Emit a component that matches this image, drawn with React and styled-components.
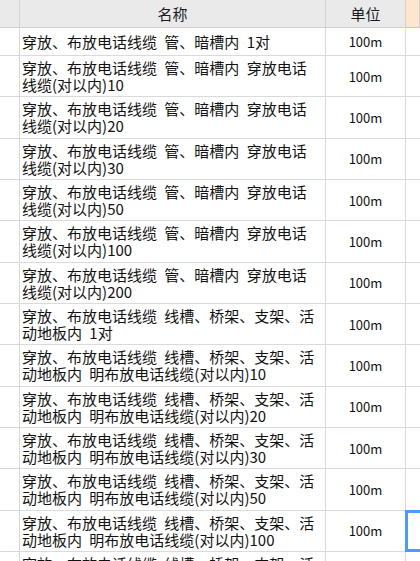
import React from 'react';
import styled, { createGlobalStyle } from 'styled-components';

const GlobalStyle = createGlobalStyle`
  html, body {
    margin: 0;
    padding: 0;
    background: #ffffff;
    overflow: hidden;
  }
  body {
    font-family: "Noto Sans CJK SC", "Noto Sans", sans-serif;
    color: #111;
  }
`;

const names = [
  '穿放、布放电话线缆 管、暗槽内 1对',
  '穿放、布放电话线缆 管、暗槽内 穿放电话线缆(对以内)10',
  '穿放、布放电话线缆 管、暗槽内 穿放电话线缆(对以内)20',
  '穿放、布放电话线缆 管、暗槽内 穿放电话线缆(对以内)30',
  '穿放、布放电话线缆 管、暗槽内 穿放电话线缆(对以内)50',
  '穿放、布放电话线缆 管、暗槽内 穿放电话线缆(对以内)100',
  '穿放、布放电话线缆 管、暗槽内 穿放电话线缆(对以内)200',
  '穿放、布放电话线缆 线槽、桥架、支架、活动地板内 1对',
  '穿放、布放电话线缆 线槽、桥架、支架、活动地板内 明布放电话线缆(对以内)10',
  '穿放、布放电话线缆 线槽、桥架、支架、活动地板内 明布放电话线缆(对以内)20',
  '穿放、布放电话线缆 线槽、桥架、支架、活动地板内 明布放电话线缆(对以内)30',
  '穿放、布放电话线缆 线槽、桥架、支架、活动地板内 明布放电话线缆(对以内)50',
  '穿放、布放电话线缆 线槽、桥架、支架、活动地板内 明布放电话线缆(对以内)100',
  '穿放、布放电话线缆 线槽、桥架、支架、活动地板内 明布放电话线缆(对以内)200',
];

const SELECTED_ROW = 12;

const Sheet = styled.div`
  width: 420px;
  height: 561px;
  overflow: hidden;
  display: flex;
  flex-direction: column;
`;

const Row = styled.div`
  display: grid;
  grid-template-columns: 20px 306px 80px 1fr;
  flex: 0 0 auto;
  height: ${(p) => p.$height}px;
`;

const HeadCell = styled.div`
  display: flex;
  align-items: center;
  justify-content: center;
  background: ${(p) => (p.$active ? '#fde6cc' : '#eaeaea')};
  border-right: 1px solid #d2d2d2;
  border-bottom: 1px solid ${(p) => (p.$active ? '#a9c8ef' : '#cfcfcf')};
  font-size: 15px;
  color: #1a1a1a;
`;

const GutterCell = styled.div`
  border-right: 1px solid #d8d8d8;
  border-bottom: 1px solid #d8d8d8;
`;

const NameCell = styled.div`
  display: flex;
  align-items: center;
  padding: 0 7px 0 2px;
  border-right: 1px solid #dadada;
  border-bottom: 1px solid #dadada;
  font-size: 15px;
  line-height: 17px;
  word-spacing: 4px;
  overflow: hidden;
`;

const UnitCell = styled.div`
  display: flex;
  align-items: center;
  justify-content: center;
  border-right: 1px solid #dadada;
  border-bottom: 1px solid #dadada;
  font-size: 13px;
  color: #111;
`;

const BlankCell = styled.div`
  position: relative;
  border-bottom: 1px solid #dadada;

  ${(p) =>
    p.$selected &&
    `
    &::after {
      content: '';
      position: absolute;
      left: -1px;
      top: -1px;
      right: -4px;
      bottom: -1px;
      border: 3px solid #4b9bff;
    }
  `}
`;

export default function App() {
  return (
    <Sheet>
      <GlobalStyle />
      <Row $height={28}>
        <HeadCell />
        <HeadCell>名称</HeadCell>
        <HeadCell>单位</HeadCell>
        <HeadCell $active />
      </Row>
      {names.map((name, i) => (
        <Row key={i} $height={i === 0 ? 28 : 41.33}>
          <GutterCell />
          <NameCell>{name}</NameCell>
          <UnitCell>100m</UnitCell>
          <BlankCell $selected={i === SELECTED_ROW} />
        </Row>
      ))}
    </Sheet>
  );
}
